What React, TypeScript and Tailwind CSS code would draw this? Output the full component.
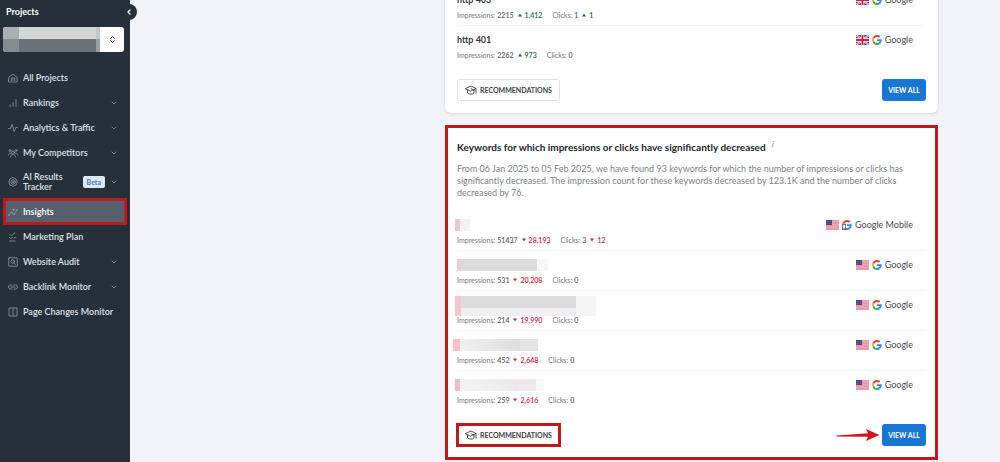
import type { ReactNode } from "react";
import { ChevronDown, ChevronLeft, ChevronsUpDown } from "lucide-react";

type NavItem = {
  label: string;
  icon: ReactNode;
  expandable?: boolean;
  beta?: boolean;
  active?: boolean;
};

type Keyword = {
  name?: string;
  blur?: ReactNode;
  impressions: string;
  impressionsDiff: string;
  clicks: string;
  clicksDiff?: string;
  engine: string;
};

function NavIcon({ children }: { children: ReactNode }) {
  return (
    <svg
      className="size-[10px] shrink-0"
      viewBox="0 0 20 20"
      fill="none"
      stroke="currentColor"
      strokeWidth="1.7"
      strokeLinecap="round"
      strokeLinejoin="round"
      aria-hidden="true"
    >
      {children}
    </svg>
  );
}

const navItems: NavItem[] = [
  {
    label: "All Projects",
    icon: (
      <NavIcon>
        <path d="M2 8.5 10 2l8 6.5V18H2z" />
        <path d="M6.500 15v-5h7v5M10 15v-2.500" />
      </NavIcon>
    ),
  },
  {
    label: "Rankings",
    expandable: true,
    icon: (
      <NavIcon>
        <path d="M4 17v-3M10 17V9M16 17V3" />
      </NavIcon>
    ),
  },
  {
    label: "Analytics & Traffic",
    expandable: true,
    icon: (
      <NavIcon>
        <path d="M1 11h4l3-8 4.500 14L15.500 9H19" />
      </NavIcon>
    ),
  },
  {
    label: "My Competitors",
    expandable: true,
    icon: (
      <NavIcon>
        <circle cx="10" cy="9" r="3" />
        <circle cx="4" cy="5" r="2" />
        <circle cx="16" cy="5" r="2" />
        <path d="M5 18c0-3 2-5 5-5s5 2 5 5M1 14c0-2 1-4 4-4M19 14c0-2-1-4-4-4" />
      </NavIcon>
    ),
  },
  {
    label: "AI Results Tracker",
    expandable: true,
    beta: true,
    icon: (
      <NavIcon>
        <path d="M10 1.500l6 2.500 2.500 6-2.500 6-6 2.500L4 16l-2.500-6L4 4z" />
        <circle cx="10" cy="10" r="4.500" />
        <circle cx="10" cy="10" r="1.200" />
      </NavIcon>
    ),
  },
  {
    label: "Insights",
    active: true,
    icon: (
      <NavIcon>
        <path d="M1.500 16.500l5-5.500 5.500 3.500 6.500-8.500" />
        <circle cx="1.800" cy="16.200" r="1" />
        <circle cx="6.500" cy="10.500" r="1.200" />
        <circle cx="12" cy="14.500" r="1.200" />
        <circle cx="18" cy="6" r="1" />
        <path d="M11.500 3.500v4M9.500 5.500h4" />
      </NavIcon>
    ),
  },
  {
    label: "Marketing Plan",
    icon: (
      <NavIcon>
        <path d="M3 4l3.500 3.500L14 1.500M3 11l3 2.500 3-3M12 11.500h4M3 18h11" />
      </NavIcon>
    ),
  },
  {
    label: "Website Audit",
    expandable: true,
    icon: (
      <NavIcon>
        <rect x="1.500" y="1.500" width="17" height="17" rx="1" />
        <circle cx="9.500" cy="9" r="3.500" />
        <path d="M12 12l3 3" />
      </NavIcon>
    ),
  },
  {
    label: "Backlink Monitor",
    expandable: true,
    icon: (
      <NavIcon>
        <path d="M8 6H5a4 4 0 0 0 0 8h3M12 6h3a4 4 0 0 1 0 8h-3M6 10h8" />
      </NavIcon>
    ),
  },
  {
    label: "Page Changes Monitor",
    icon: (
      <NavIcon>
        <path d="M8 2H2v16h6M12 2h6v16h-6M10 1v18" />
      </NavIcon>
    ),
  },
];

const increased: Keyword[] = [
  { name: "http 403", impressions: "2215", impressionsDiff: "1,412", clicks: "1", clicksDiff: "1", engine: "Google" },
  { name: "http 401", impressions: "2262", impressionsDiff: "973", clicks: "0", engine: "Google" },
];

const decreased: Keyword[] = [
  {
    blur: (
      <div className="-ml-0.5 flex h-3">
        <span className="w-[5px] bg-[#f5c3cd]" />
        <span className="w-[10px] bg-[#f2f2f4]" />
      </div>
    ),
    impressions: "51437",
    impressionsDiff: "28,193",
    clicks: "3",
    clicksDiff: "12",
    engine: "Google Mobile",
  },
  {
    blur: (
      <div className="flex h-3">
        <span className="w-1 bg-[#f0ccd3]" />
        <span className="w-[76px] bg-[#dcdcde]" />
        <span className="w-[11px] bg-[#f7f7f8]" />
      </div>
    ),
    impressions: "531",
    impressionsDiff: "20,208",
    clicks: "0",
    engine: "Google",
  },
  {
    blur: (
      <div className="-mt-[3px] -mb-[5px] -ml-0.5 flex h-5">
        <span className="w-[6px] bg-[#f5c5ce]" />
        <span className="w-[115px] bg-linear-to-b from-[#dcdcde] from-60% to-[#f1eff1] to-60%" />
        <span className="w-[20px] bg-[#f5f5f6]" />
      </div>
    ),
    impressions: "214",
    impressionsDiff: "19,990",
    clicks: "0",
    engine: "Google",
  },
  {
    blur: (
      <div className="-ml-1 flex h-3">
        <span className="w-[7px] bg-[#f5c0cb]" />
        <span className="w-[60px] bg-linear-to-r from-[#efeff0] to-[#dedee0]" />
        <span className="w-[18px] bg-[#e4e3e5]" />
      </div>
    ),
    impressions: "452",
    impressionsDiff: "2,648",
    clicks: "0",
    engine: "Google",
  },
  {
    blur: (
      <div className="-ml-0.5 flex h-3">
        <span className="w-[5px] bg-[#f3bcc8]" />
        <span className="w-[58px] bg-linear-to-r from-[#f4f4f5] to-[#e9e9eb]" />
        <span className="w-[18px] bg-[#efe7ea]" />
        <span className="w-2 bg-[#faf9fa]" />
      </div>
    ),
    impressions: "259",
    impressionsDiff: "2,616",
    clicks: "0",
    engine: "Google",
  },
];

function UkFlag() {
  return (
    <svg className="h-[10px] w-[13px]" viewBox="0 0 26 20" aria-hidden="true">
      <rect width="26" height="20" rx="2" fill="#29389b" />
      <path d="M0 0l26 20M26 0L0 20" stroke="#fff" strokeWidth="4" />
      <path d="M0 0l26 20M26 0L0 20" stroke="#d8324a" strokeWidth="1.500" />
      <path d="M13 0v20M0 10h26" stroke="#fff" strokeWidth="7" />
      <path d="M13 0v20M0 10h26" stroke="#d8223c" strokeWidth="4" />
    </svg>
  );
}

function UsFlag() {
  return (
    <svg className="h-[10px] w-[13px]" viewBox="0 0 26 20" aria-hidden="true">
      <rect width="26" height="20" fill="#f3c3ca" />
      <path
        d="M0 1.500h26M0 4.500h26M0 7.500h26M0 10.500h26M0 13.500h26M0 16.500h26M0 19.500h26"
        stroke="#e3798b"
        strokeWidth="1.500"
      />
      <rect width="12" height="10" fill="#4b4a86" />
      <path d="M2 3h8M2 7h8" stroke="#a9a8cc" strokeWidth="1" strokeDasharray="1 2" />
    </svg>
  );
}

function GoogleLogo({ mobile }: { mobile?: boolean }) {
  return (
    <svg className="size-[10px]" viewBox="0 0 48 48" aria-hidden="true">
      <path fill="#EA4335" d="M24 9.500c3.540 0 6.710 1.220 9.210 3.600l6.850-6.850C35.900 2.380 30.470 0 24 0 14.620 0 6.510 5.380 2.560 13.220l7.980 6.190C12.430 13.720 17.740 9.500 24 9.500z" />
      <path fill="#4285F4" d="M46.980 24.550c0-1.570-.15-3.090-.38-4.550H24v9.020h12.940c-.58 2.960-2.260 5.480-4.780 7.180l7.730 6c4.510-4.180 7.090-10.360 7.090-17.650z" />
      <path fill="#FBBC05" d="M10.530 28.590c-.48-1.450-.76-2.990-.76-4.590s.27-3.140.76-4.590l-7.980-6.190C.92 16.460 0 20.120 0 24c0 3.880.92 7.540 2.560 10.780l7.970-6.190z" />
      <path fill="#34A853" d="M24 48c6.480 0 11.930-2.130 15.890-5.810l-7.730-6c-2.150 1.450-4.920 2.300-8.160 2.300-6.260 0-11.570-4.220-13.470-9.910l-7.980 6.190C6.510 42.620 14.620 48 24 48z" />
      {mobile && (
        <g>
          <rect x="0" y="18" width="19" height="30" rx="3" fill="#555b66" />
          <rect x="4" y="23" width="11" height="18" fill="#fff" />
        </g>
      )}
    </svg>
  );
}

function Diff({ value, up }: { value: string; up?: boolean }) {
  return (
    <span className={up ? "flex items-center gap-[3px] text-[#25664f]" : "flex items-center gap-[3px] text-[#c9203f]"}>
      <svg className="size-1" viewBox="0 0 8 8" fill="currentColor" aria-hidden="true">
        {up ? <path d="M4 1l4 6H0z" /> : <path d="M0 1h8L4 7z" />}
      </svg>
      {value}
    </span>
  );
}

function KeywordRow({ item, up }: { item: Keyword; up?: boolean }) {
  return (
    <li className="flex h-10 items-start justify-between border-b border-[#f5f5f7] pt-2 last:border-transparent">
      <div className="flex flex-col gap-[3px]">
        {item.name ? <h3 className="text-[9px] leading-3 font-bold text-[#33373c]">{item.name}</h3> : item.blur}
        <div className="flex gap-[10px] text-[7px] leading-3 font-semibold text-[#5d6166]">
          <p className="flex gap-0.5">
            <span className="font-medium text-[#7b7f84]">Impressions:</span>
            {item.impressions}
            <span className="pl-0.5">
              <Diff value={item.impressionsDiff} up={up} />
            </span>
          </p>
          <p className="flex gap-0.5">
            <span className="font-medium text-[#7b7f84]">Clicks:</span>
            {item.clicks}
            {item.clicksDiff && (
              <span className="pl-0.5">
                <Diff value={item.clicksDiff} up={up} />
              </span>
            )}
          </p>
        </div>
      </div>
      <div className="mr-[13px] flex items-center gap-[3px] text-[9px] leading-3 text-[#45494e]">
        {up ? <UkFlag /> : <UsFlag />}
        <GoogleLogo mobile={item.engine === "Google Mobile"} />
        <span>{item.engine}</span>
      </div>
    </li>
  );
}

function CardFooter({ marked }: { marked?: boolean }) {
  return (
    <div className="flex items-center justify-between">
      <button
        type="button"
        className={
          "flex h-[22px] items-center gap-[3px] border border-[#dfe1e4] px-[7px] text-[7px] font-bold text-[#3c4046] " +
          (marked ? "outline-3 -outline-offset-2 outline-[#c4161c]" : "rounded-[3px]")
        }
      >
        <svg
          className="h-[10px] w-3"
          viewBox="0 0 24 20"
          fill="none"
          stroke="currentColor"
          strokeWidth="1.800"
          strokeLinejoin="round"
          strokeLinecap="round"
          aria-hidden="true"
        >
          <path d="M1 7l11-5 10 5-10 5z" />
          <path d="M5 9v7c4 3 10 3 13 0V9M22 7v9M12 7l5 3" />
        </svg>
        RECOMMENDATIONS
      </button>
      <div className="flex items-center gap-0.5">
        {marked && (
          <svg className="h-3 w-11" viewBox="0 0 88 24" fill="#d01616" aria-hidden="true">
            <path d="M1 13l63-4.500-4-8.500 27 12-27 12 4-8.500-63-.500z" />
          </svg>
        )}
        <button type="button" className="h-[22px] rounded-[3px] bg-[#1976d2] px-[6px] text-[7px] font-bold text-white">
          VIEW ALL
        </button>
      </div>
    </div>
  );
}

function Sidebar() {
  return (
    <aside className="relative min-h-screen w-[130px] shrink-0 bg-[#25303b] text-[#dde1e5]">
      <h2 className="px-1.5 pt-1.5 text-[9px] leading-3 font-bold text-white">Projects</h2>
      <button
        type="button"
        aria-label="Collapse sidebar"
        className="absolute top-1 -right-[7px] flex size-4 items-center justify-center rounded-full bg-[#25303b] text-white"
      >
        <ChevronLeft className="size-2" strokeWidth={4} />
      </button>
      <button
        type="button"
        aria-label="Select project"
        className="mt-[9px] ml-[3px] flex h-[25px] w-[121px] overflow-hidden rounded-[3px] bg-white"
      >
        <span className="h-full w-4 bg-linear-to-b from-[#abb0b5] from-48% to-[#858b92] to-48%" />
        <span className="h-full flex-1 bg-linear-to-b from-[#d3d6d8] from-48% to-[#6b7279] to-48%" />
        <span className="h-full w-1 bg-linear-to-b from-[#c4c8cb] from-48% to-[#9ba0a5] to-48%" />
        <span className="flex h-full w-6 items-center justify-center text-[#25303b]">
          <ChevronsUpDown className="size-[9px]" strokeWidth={2.5} />
        </span>
      </button>
      <nav className="mt-[13px] px-1">
        {navItems.map((item) => (
          <a
            key={item.label}
            href="#"
            aria-current={item.active ? "page" : undefined}
            className={
              "flex items-center gap-[5px] pr-2 pl-1 text-[9px] leading-[10px] font-semibold " +
              (item.beta ? "h-[34px] " : "h-[25px] ") +
              (item.active ? "bg-[#56606d] text-white outline-3 -outline-offset-2 outline-[#c4161c]" : "")
            }
          >
            <span className="text-[#8b959e]">{item.icon}</span>
            <span className={item.beta ? "w-14" : "whitespace-nowrap"}>{item.label}</span>
            {item.beta && (
              <span className="flex h-3 items-center rounded-xs bg-[#dbe9f8] px-1 text-[7px] font-bold text-[#54779f]">
                Beta
              </span>
            )}
            {item.expandable && <ChevronDown className="ml-auto size-2 shrink-0 text-[#a5adb5]" />}
          </a>
        ))}
      </nav>
    </aside>
  );
}

export default function App() {
  return (
    <div className="flex h-screen overflow-hidden bg-[#f1f3f8] font-[Lato,sans-serif]">
      <Sidebar />
      <main className="grid flex-1 grid-cols-[315fr_493fr_62fr] content-start">
        <div className="col-start-2 flex flex-col gap-3">
          <section className="-mt-[14px] rounded-md bg-white px-3 pb-3 shadow-sm">
            <ul>
              {increased.map((item) => (
                <KeywordRow key={item.name} item={item} up />
              ))}
            </ul>
            <div className="pt-[13px]">
              <CardFooter />
            </div>
          </section>
          <section className="border-3 border-[#c4161c] bg-white px-[9px] pt-[11px] pb-[11px]">
            <h2 className="text-[10px] leading-4 font-bold text-[#22262b]">
              Keywords for which impressions or clicks have significantly decreased{" "}
              <sup className="ml-1 text-[8px] font-normal text-[#6f7378] italic">i</sup>
            </h2>
            <p className="mt-2 pr-2 text-[9px] leading-3 text-[#7b7f84]">
              From 06 Jan 2025 to 05 Feb 2025, we have found 93 keywords for which the number of impressions or clicks has
              significantly decreased. The impression count for these keywords decreased by 123.1K and the number of clicks
              decreased by 76.
            </p>
            <ul className="mt-3">
              {decreased.map((item) => (
                <KeywordRow key={item.impressions} item={item} />
              ))}
            </ul>
            <div className="pt-[13px]">
              <CardFooter marked />
            </div>
          </section>
        </div>
      </main>
    </div>
  );
}
